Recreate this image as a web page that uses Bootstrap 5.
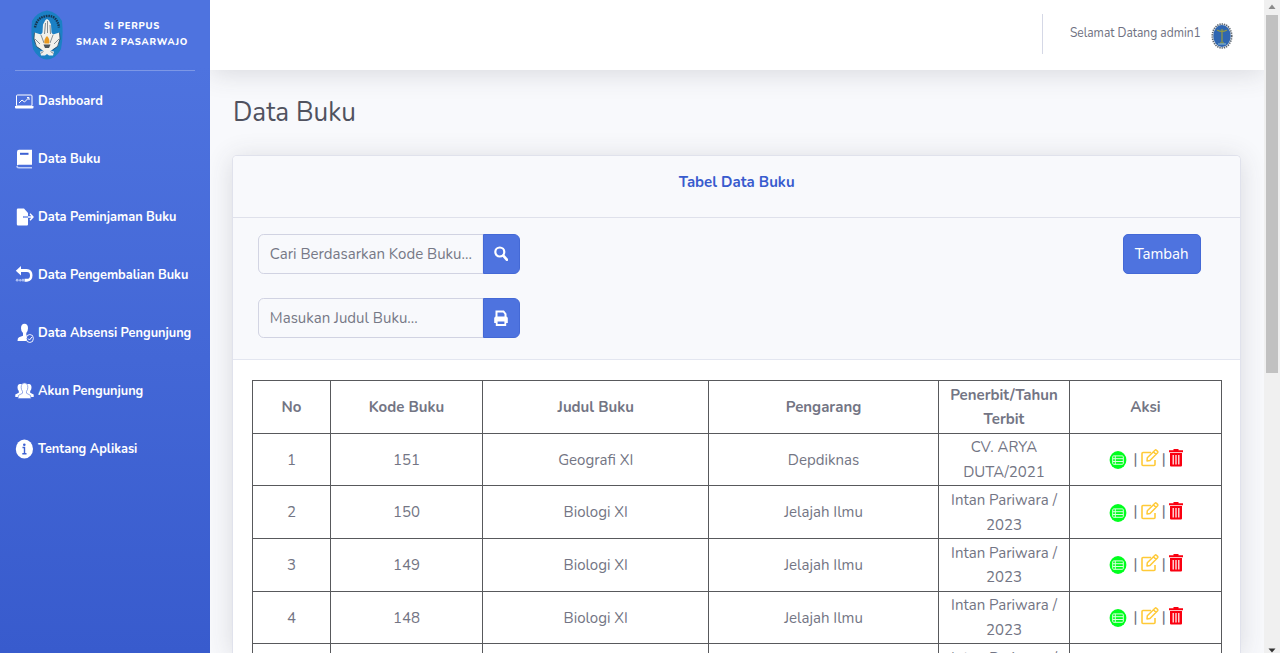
<!DOCTYPE html>
<html lang="id">
<head>
<meta charset="utf-8">
<meta name="viewport" content="width=device-width, initial-scale=1">
<title>SI Perpus - Data Buku</title>
<link href="https://cdn.jsdelivr.net/npm/bootstrap@5.3.0/dist/css/bootstrap.min.css" rel="stylesheet">
<style>
body{font-family:Nunito,Lato,"Open Sans",sans-serif;color:#737584;background:#f8f9fc;height:653px}
.nar{display:inline-block;white-space:nowrap;transform:scaleX(.91)}
.nar-left{transform-origin:0 50%}
.nar-right{transform-origin:100% 50%}
.side{width:210px;background:linear-gradient(180deg,#4e73df 10%,#385bcd 100%);color:#fff}
.brand{height:70px;padding-left:31px}
.brand-text{width:126px;margin-left:6px;margin-top:-3px;font-size:10.4px;line-height:15.6px;font-weight:800;letter-spacing:.82px}
.rule{margin:0 15px 1px;height:1px;background:#7c97e6}
.side-item{height:58px;padding-left:15px;color:#fff;text-decoration:none;font-weight:700;font-size:14px;white-space:nowrap}
.side-item .nar{margin-top:-2px}
.side-item svg{width:19px;height:20px;margin-right:3.5px;flex:none}
.main-col{width:1054px}
.topbar{height:70px;background:#fff;box-shadow:0 3px 27px rgba(58,59,69,.17);z-index:2}
.topbar .vline{width:1px;height:40px;background:#d5d8e6;margin-top:-3px;margin-right:14px}
.hello{font-size:13.2px;margin:-2px 10px 0 0;color:#6e7080}
.page-title{font-size:28.7px;line-height:34px;font-weight:400;color:#50525f;margin:25px 0 26px 22.500px}
.sheet{margin-left:22px;width:1009px;height:498px;background:#fff;border:1px solid #e0e2ec;border-bottom:0;border-radius:5px 5px 0 0;box-shadow:0 3px 27px rgba(58,59,69,.16);overflow:hidden}
.sheet-head{height:62px;background:#f8f9fc;border-bottom:1px solid #dfe1eb;color:#385bce;font-weight:700;font-size:16.5px;line-height:52px}
.tools{height:142px;background:#f8f9fc;border-bottom:1px solid #e3e6f0;padding:16px 39px 0 25px}
.tools .input-group{width:262px;height:40px;margin-bottom:24px}
.tools .input-group>.form-control{flex:none;width:248.400px;margin-right:-22.400px;transform:scaleX(.91);transform-origin:0 50%;background:#f8f9fc;border-color:#cfd1e1;font-size:16.5px;padding:0 0 0 12px}
.tools .form-control::placeholder{color:#767886;opacity:1}
.btn-main{background:#4e73df!important;border-color:#4469d6!important;color:#fff!important}
.input-group .btn-main{width:38px;padding:0 1px 3px 0}
.btn-add{width:78px;height:40px;padding:0;font-size:16.5px;border-radius:5px;display:flex;align-items:center;justify-content:center}
.books{width:970px;margin:20px 0 0 18.5px;table-layout:fixed;border-collapse:collapse;font-size:16.5px;line-height:24.7px;text-align:center}
.books th,.books td{border:1px solid #58595c;padding:1px 0 0;height:52.7px;vertical-align:middle;overflow:hidden}
.books .nar{display:block}
.books th{font-weight:700}
.acts{height:26px;padding-left:1px;margin-top:-2px}
.scroll{width:16px;background:#f0f0f0}
.thumb{width:12px;height:358px;background:#c1c1c1;margin:0 auto}
</style>
</head>
<body class="overflow-hidden">
<svg class="d-none">
<symbol id="list" viewBox="0 0 18 18"><ellipse cx="9" cy="9" rx="8.4" ry="9" fill="#00ff1e"/><g fill="none" stroke="#d8ffdc" stroke-width="1"><rect x="3.700" y="4.900" width="10.600" height="8.400" rx="1"/><path d="M3.700 7.700h10.600M3.700 10.500h10.600M6.300 4.900v8.400"/></g></symbol>
<symbol id="edit" viewBox="0 0 18 18"><path d="M10 3.500H2q-1 0-1 1v11q0 1 1 1h11q1 0 1-1V11" fill="none" stroke="#ffca38" stroke-width="1.600"/><path d="M6.300 8.800 14 1.200q.7-.6 1.400 0l1.200 1.200q.6.700 0 1.400L9 11.500l-3 .5zM12.400 2.800l2.600 2.600" fill="#fff" stroke="#ffca38" stroke-width="1.500" stroke-linejoin="round"/></symbol>
<symbol id="trash" viewBox="0 0 14 18"><path d="M4.500 0h5v1.200H14v2H0v-2h4.500zM1 4h12v12.500q0 1-1 1H2q-1 0-1-1z" fill="#fa0010"/><path d="M4.200 6v9.500M7 6v9.500M9.800 6v9.500" stroke="#fff" stroke-width="1.200"/></symbol>
</svg>
<div class="d-flex h-100">
<aside class="side flex-shrink-0">
  <div class="brand d-flex align-items-center">
    <svg width="32" height="50" viewBox="0 0 32 50"><path d="M16 .5Q26 2 31 11q1.500 15-1 28Q25 49 16 49.500 7 49 2 39-.5 26 1 11 6 2 16 .5z" fill="#1b80c4"/><path d="M4 17.500Q6 7 16 6T28 17.500" fill="none" stroke="#173552" stroke-width="2.400" stroke-dasharray="1.600 .8"/><path d="M14.500 10l1.500-1 2 1.500 2 4 .5 8 1.500 2 6.500-2L29 28l-2 8-6 4-1.500 1 3.500.5-1 4h-4l-2-1.500-2 1.500h-4l-1-4 3.500-.5L11 40l-6-4-2-8 .500-5.500 6.500 2 1.500-2 .5-8z" fill="#f1f1ed"/><path d="M14.500 13l-1 11m3-13v12m2.500-8 .5 9M10 25l3 8m9-8-3 8M4 29l5 5m19-5-5 5M9.500 43.500l3-2m10 2-3-2" fill="none" stroke="#68727a" stroke-width=".8"/><path d="M3.500 22.500 3 29l2.500 7.500 5 3.500M28.500 22.500 29 29l-2.500 7.500-5 3.500" fill="none" stroke="#26384a" stroke-width=".7"/><path d="M16 26q3.500 3.500 2 7.500h-4.500q-1-4 2.500-7.500z" fill="#e99a22"/><path d="M12.500 34.500h7l-1.500 3.500h-4z" fill="#4a545c"/></svg>
    <div class="brand-text nar text-center">SI PERPUS<br>SMAN 2 PASARWAJO</div>
  </div>
  <div class="rule"></div>
  <nav class="d-flex flex-column">
    <a class="side-item d-flex align-items-center" href="#"><svg viewBox="0 0 19 20"><rect x="1.500" y="4" width="15.500" height="11" rx="1" fill="none" stroke="#fff" stroke-width="1"/><path d="M0 15h18.500v1.500q0 1-1 1H1q-1 0-1-1z" fill="#fff"/><path d="M4 12l3-3 2.500 2 4-4M12 6.500h2V9" fill="none" stroke="#fff"/></svg><span class="nar nar-left">Dashboard</span></a>
    <a class="side-item d-flex align-items-center" href="#"><svg viewBox="0 0 19 20"><path d="M4 .7h13v15H4q-2 0-2 1.300V3Q2 .7 4 .7z" fill="#fff"/><path d="M5 4.800h8.500" stroke="#3d61d2" stroke-width="2"/><path d="M2 17q0 1.800 2 1.800h13" fill="none" stroke="#b9c9f6" stroke-width="1.400"/></svg><span class="nar nar-left">Data Buku</span></a>
    <a class="side-item d-flex align-items-center" href="#"><svg viewBox="0 0 19 20"><path d="M3 1.500h6L13 6v3H8v2h5v6.500q0 1-1 1H3q-1.200 0-1.200-1.200V2.700Q1.800 1.500 3 1.500z" fill="#fff"/><path d="M8.500 10H18M15 6.800l3 3.200-3 3.200" fill="none" stroke="#fff" stroke-width="1.400"/><path d="M8 10h5" stroke="#88a0ea" stroke-width="1.600"/></svg><span class="nar nar-left">Data Peminjaman Buku</span></a>
    <a class="side-item d-flex align-items-center" href="#"><svg viewBox="0 0 19 20"><path d="M.8 5.800 6 1v3h5.500q6 .5 6 6.200T12 16.800H9.500v-3H12q3 0 3-3.400t-3-3.400H6v3.500z" fill="#fff"/><g fill="#a9bcf3"><circle cx="2.200" cy="15.200" r="1.400"/><circle cx="5.300" cy="15.200" r="1.200"/><circle cx="8" cy="15.200" r="1.400"/></g></svg><span class="nar nar-left">Data Pengembalian Buku</span></a>
    <a class="side-item d-flex align-items-center" href="#"><svg viewBox="0 0 19 20"><path d="M9.500.8q3.500 0 3.500 4.500 0 3-1.700 4.700v2.500l2.500 1-2 4.500H2.500q0-3 1.500-3.800l4-1.500V10Q6 8.500 6 5.300 6 .8 9.500.8z" fill="#fff"/><ellipse cx="14.800" cy="15.500" rx="3.600" ry="4" fill="#4267d7" stroke="#fff" stroke-width=".9"/><path d="m13 15.500 1.500 1.500 2.500-3" fill="none" stroke="#fff"/></svg><span class="nar nar-left">Data Absensi Pengunjung</span></a>
    <a class="side-item d-flex align-items-center" href="#"><svg viewBox="0 0 19 20"><path d="M5 3q-2.500 0-2.500 3.500 0 2.200 1.300 3.500v1.800L.3 13.500V16h18.400v-2.500l-3.500-1.700V10q1.300-1.300 1.300-3.500Q16.500 3 14 3z" fill="#fff"/><path d="M9.500 2q3.300 0 3.300 4.300 0 2.500-1.300 4v1.900l4 2.200.5 3.100H3l.5-3.100 4-2.200v-1.900q-1.300-1.500-1.300-4Q6.200 2 9.500 2z" fill="#fff" stroke="#6a86e0" stroke-width=".7"/></svg><span class="nar nar-left">Akun Pengunjung</span></a>
    <a class="side-item d-flex align-items-center" href="#"><svg viewBox="0 0 19 20"><ellipse cx="9.400" cy="10" rx="8.600" ry="9.500" fill="#fff"/><circle cx="9.300" cy="5.700" r="1.300" fill="#3d61d2"/><path d="M7.500 8.500h2v6M7.300 14.700h4.200" fill="none" stroke="#3d61d2" stroke-width="1.400"/></svg><span class="nar nar-left">Tentang Aplikasi</span></a>
  </nav>
</aside>
<main class="main-col flex-shrink-0 d-flex flex-column overflow-hidden">
  <header class="topbar position-relative flex-shrink-0 d-flex align-items-center justify-content-end pe-4">
    <div class="vline"></div>
    <span class="hello nar nar-right">Selamat Datang admin1</span>
    <svg width="22" height="28" viewBox="0 0 22 28" style="margin-right:7px;margin-top:2px"><ellipse cx="11" cy="14" rx="9.700" ry="12" fill="#dfe3e7" stroke="#5c6670" stroke-width="1.700" stroke-dasharray="1.300 1"/><ellipse cx="11" cy="14" rx="8.700" ry="11" fill="#2f66b1"/><path d="M6 8q5 3 10 0M11 7v13m-2 1h4" fill="none" stroke="#8f9744" stroke-width="1.300"/><path d="M7 22h8" stroke="#73a4c9" stroke-width="1.500"/></svg>
  </header>
  <h1 class="page-title flex-shrink-0"><span class="nar nar-left">Data Buku</span></h1>
  <section class="sheet flex-shrink-0">
    <div class="sheet-head text-center"><span class="nar">Tabel Data Buku</span></div>
    <div class="tools d-flex justify-content-between">
      <div>
        <div class="input-group flex-nowrap"><input class="form-control" placeholder="Cari Berdasarkan Kode Buku..."><button class="btn btn-main" aria-label="Cari"><svg width="14" height="15" viewBox="0 0 14 15"><circle cx="5.800" cy="6" r="4.500" fill="none" stroke="#fff" stroke-width="2.200"/><path d="m9.300 9.700 3.500 4" stroke="#fff" stroke-width="2.700" stroke-linecap="round"/></svg></button></div>
        <div class="input-group flex-nowrap"><input class="form-control" placeholder="Masukan Judul Buku..."><button class="btn btn-main" aria-label="Cetak"><svg width="14" height="16" viewBox="0 0 14 16"><path d="M2.500 7V1.500h7L11.500 4v3" fill="none" stroke="#fff" stroke-width="2"/><path d="M2 6.500h10q1.800 0 1.800 2V13H.2V8.500q0-2 1.800-2z" fill="#fff"/><path d="M2.700 10.500h8.600v4.500H2.700z" fill="#4e73df" stroke="#fff" stroke-width="1.800"/></svg></button></div>
      </div>
      <button class="btn btn-main btn-add"><span class="nar">Tambah</span></button>
    </div>
    <table class="books">
      <colgroup><col style="width:78px"><col style="width:152px"><col style="width:226.500px"><col style="width:230px"><col style="width:131px"><col style="width:152px"></colgroup>
      <thead><tr><th><span class="nar">No</span></th><th><span class="nar">Kode Buku</span></th><th><span class="nar">Judul Buku</span></th><th><span class="nar">Pengarang</span></th><th><span class="nar">Penerbit/Tahun<br>Terbit</span></th><th><span class="nar">Aksi</span></th></tr></thead>
      <tbody id="rows"></tbody>
    </table>
  </section>
</main>
<div class="scroll flex-grow-1 d-flex flex-column">
  <svg width="16" height="15" viewBox="0 0 16 15"><path d="M8 4.500 11.500 9h-7z" fill="#8b8b8b"/></svg>
  <div class="thumb"></div>
  <svg class="mt-auto" width="16" height="7" viewBox="0 0 16 7"><path d="M4.500 2.500h7L8 6.500z" fill="#333"/></svg>
</div>
</div>
<script src="https://cdn.jsdelivr.net/npm/bootstrap@5.3.0/dist/js/bootstrap.bundle.min.js"></script>
<script>
const books = [
  [1,151,'Geografi XI','Depdiknas','CV. ARYA<br>DUTA/2021'],
  [2,150,'Biologi XI','Jelajah Ilmu','Intan Pariwara /<br>2023'],
  [3,149,'Biologi XI','Jelajah Ilmu','Intan Pariwara /<br>2023'],
  [4,148,'Biologi XI','Jelajah Ilmu','Intan Pariwara /<br>2023'],
  [5,147,'Biologi XI','Jelajah Ilmu','Intan Pariwara /<br>2023']
];
const acts = '<div class="acts d-flex justify-content-center align-items-center"><svg width="18" height="18" style="margin:2px 6px 0 0"><use href="#list"/></svg>|<svg width="18" height="18" style="margin:0 3px 2px 3px"><use href="#edit"/></svg>|<svg width="14" height="18" style="margin:0 0 2px 3px"><use href="#trash"/></svg></div>';
document.getElementById('rows').innerHTML = books.map(b => '<tr>' + b.map(c => '<td><span class="nar">' + c + '</span></td>').join('') + '<td>' + acts + '</td></tr>').join('');
</script>
</body>
</html>
